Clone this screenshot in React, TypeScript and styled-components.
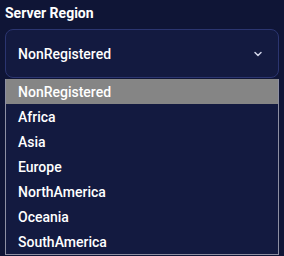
import React, { useState } from 'react';
import styled, { createGlobalStyle } from 'styled-components';

const regions = ['NonRegistered', 'Africa', 'Asia', 'Europe', 'NorthAmerica', 'Oceania', 'SouthAmerica'];

const GlobalStyle = createGlobalStyle`
	html, body {
		margin: 0;
		background: #0f1536;
		font-family: Roboto, 'Noto Sans', sans-serif;
		color: #ffffff;
	}
`;

const App: React.FC = () => {
	const [selected] = useState('NonRegistered');

	return (
		<Page>
			<GlobalStyle />
			<Label>Server Region</Label>
			<Field>
				<SelectBox>
					<span>{selected}</span>
					<svg width='12' height='12' viewBox='0 0 24 24' fill='none' stroke='#d0d4e8' strokeWidth='3' strokeLinecap='round' strokeLinejoin='round'>
						<path d='M6 9l6 6 6-6' />
					</svg>
				</SelectBox>
				<List>
					{regions.map((r) => (
						<Option key={r} active={r === selected}>
							{r}
						</Option>
					))}
				</List>
			</Field>
		</Page>
	);
};

const Page = styled.div`
	padding: 4px 5px;
	height: 256px;
	box-sizing: border-box;
`;

const Label = styled.div`
	font-size: 14px;
	font-weight: 700;
	line-height: 18px;
	margin-bottom: 7px;
`;

const Field = styled.div`
	position: relative;
`;

const SelectBox = styled.div`
	display: flex;
	align-items: center;
	justify-content: space-between;
	height: 49px;
	box-sizing: border-box;
	padding: 1px 14px 0 12px;
	border: 1px solid #2b3570;
	border-radius: 8px;
	background: #131a40;
	font-size: 14px;
	font-weight: 500;
`;

const List = styled.div`
	position: absolute;
	top: 50px;
	left: 0;
	right: 0;
	border: 1px solid #8d8fa3;
	border-top: none;
	background: #131a40;
`;

const Option = styled.div<{ active?: boolean }>`
	height: 25px;
	line-height: 27px;
	padding-left: 12px;
	font-size: 14px;
	font-weight: 500;
	background: ${(p) => (p.active ? '#858585' : 'transparent')};
`;

export default App;
